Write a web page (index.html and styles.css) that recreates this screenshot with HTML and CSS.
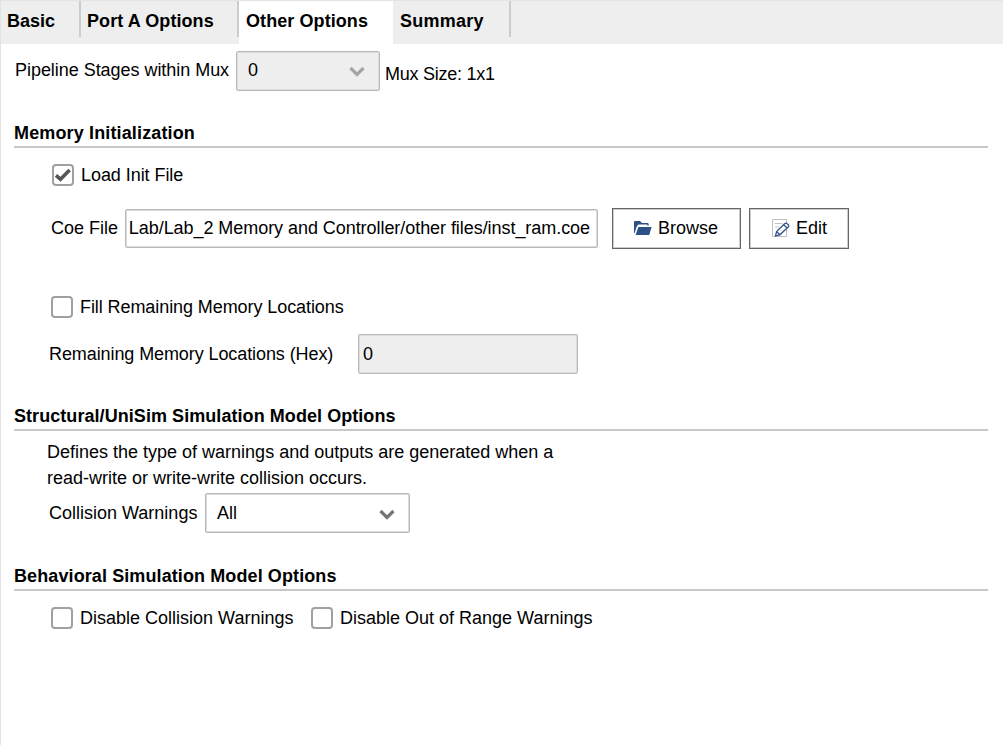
FILE: index.html
```html
<!DOCTYPE html>
<html lang="en">
<head>
<meta charset="utf-8">
<title>Other Options</title>
<link rel="stylesheet" href="styles.css">
</head>
<body>
<div class="panel">
  <nav class="tabs">
    <div class="tab tab-basic">Basic</div>
    <div class="tab tab-port">Port A Options</div>
    <div class="tab tab-other active">Other Options</div>
    <div class="tab tab-summary">Summary</div>
  </nav>
  <main class="content">
    <div class="row pipeline">
      <span class="label pipeline-label">Pipeline Stages within Mux</span>
      <div class="select disabled"><span>0</span><svg class="chevron" viewBox="0 0 16 11"><path d="M1.5 2 8 8.5 14.5 2"/></svg></div>
      <span class="mux">Mux Size: 1x1</span>
    </div>

    <section class="section memory">
      <h2>Memory Initialization</h2>
      <div class="row load">
        <span class="check"><svg viewBox="0 0 18 18"><path d="M2 9.3 6.5 13.3 15.6 4"/></svg></span><span>Load Init File</span>
      </div>
      <div class="row coe">
        <span class="label coe-label">Coe File</span>
        <div class="input path"><span>Lab/Lab_2 Memory and Controller/other files/inst_ram.coe</span></div>
        <div class="button browse">
          <svg class="icon" viewBox="0 0 19 18"><path class="folder" d="M1 14V3.2Q1 2 2.2 2H7L9 4H14.5Q15.6 4 15.6 5.2V6.7H14.4V5.5H5.2L3.4 8.2 1.7 14Z"/><path class="folder" d="M5.4 7.9H18.6L16.2 16H2.6Z"/></svg><span>Browse</span>
        </div>
        <div class="button edit">
          <svg class="icon" viewBox="0 0 19 18"><path class="paper" d="M1.5 .5H15.5V17.5H1.5ZM4 4.5H11M4 8H8"/><path class="pencil" d="M4.5 16.8 5.6 12.5 13.8 4.5Q15 3.6 16.2 4.7L17.2 5.7Q18.2 6.9 17.2 8L8.8 15.8ZM5.6 12.5 8.8 15.8M12.7 5.7 16 9"/></svg><span>Edit</span>
        </div>
      </div>
      <div class="row fill"><span class="check"></span><span>Fill Remaining Memory Locations</span></div>
      <div class="row remaining">
        <span class="label remaining-label">Remaining Memory Locations (Hex)</span>
        <div class="input disabled hex">0</div>
      </div>
    </section>

    <section class="section structural">
      <h2>Structural/UniSim Simulation Model Options</h2>
      <p>Defines the type of warnings and outputs are generated when a<br>read-write or write-write collision occurs.</p>
      <div class="row collision">
        <span class="label collision-label">Collision Warnings</span>
        <div class="select wide"><span>All</span><svg class="chevron" viewBox="0 0 16 11"><path d="M1.5 2 8 8.5 14.5 2"/></svg></div>
      </div>
    </section>

    <section class="section behavioral">
      <h2>Behavioral Simulation Model Options</h2>
      <div class="row disable">
        <div class="option"><span class="check"></span><span>Disable Collision Warnings</span></div>
        <div class="option"><span class="check"></span><span>Disable Out of Range Warnings</span></div>
      </div>
    </section>
  </main>
</div>
</body>
</html>
```
FILE: styles.css
```css
* { box-sizing: border-box; }
body {
  margin: 0;
  background: #fff;
  color: #000;
  font: 18px/20px "Liberation Sans", Arial, sans-serif;
}
.panel { height: 745px; border-left: 1px solid #e2e2e2; overflow: hidden; }
.tabs {
  display: flex;
  height: 44px;
  border-top: 1px solid #e4e4e4;
  background: #eee;
  font-weight: bold;
}
.tab { position: relative; padding: 10px 0 0 6px; white-space: nowrap; }
.tab-basic { width: 80px; }
.tab-port { width: 158px; letter-spacing: 0.08px; }
.tab-other { width: 154px; padding-left: 7px; letter-spacing: 0.08px; }
.tab-summary { width: 118px; padding-left: 7px; letter-spacing: 0.25px; }
.tab::after {
  content: "";
  position: absolute;
  top: 0;
  right: 0;
  width: 2px;
  height: 36px;
  background: #ccc;
}
.tab-other::after { display: none; }
.active { background: #fff; }
.content { padding: 7px 15px 0 13px; }
.row { display: flex; align-items: center; white-space: nowrap; }
.label { flex: none; }
.pipeline { height: 40px; }
.pipeline-label { width: 222px; padding: 0 0 2px 1px; letter-spacing: -0.04px; }
.mux { padding: 6px 0 0 5px; letter-spacing: -0.25px; }
.select {
  display: flex;
  align-items: center;
  justify-content: space-between;
  width: 144px;
  height: 40px;
  padding: 0 14px 2px 11px;
  border: 1px solid #b8b8b8;
  border-radius: 2px;
  background: #fff;
  box-shadow: inset 0 0 0 1px #ddd;
}
.chevron {
  width: 16px;
  height: 11px;
  margin-top: 3px;
  fill: none;
  stroke: #777;
  stroke-width: 3.2;
}
.disabled { background: #eee; }
.disabled .chevron { stroke: #a5a5a5; }
h2 {
  height: 25px;
  margin: 0;
  border-bottom: 2px solid #c8c8c8;
  font-size: 18px;
  line-height: 20px;
}
.memory { margin-top: 32px; }
.memory h2 { letter-spacing: 0.14px; }
.check {
  display: flex;
  flex: none;
  width: 22px;
  height: 22px;
  margin-right: 7px;
  border: 2px solid #a0a0a0;
  border-radius: 4px;
  background: #fff;
}
.check svg { width: 18px; height: 18px; fill: none; stroke: #555; stroke-width: 3.6; }
.load { height: 22px; margin: 16px 0 0 38px; letter-spacing: -0.06px; }
.coe { height: 42px; margin: 21px 0 0 37px; }
.coe-label { width: 74px; }
.input {
  display: flex;
  align-items: center;
  height: 39px;
  border: 1px solid #b8b8b8;
  border-radius: 2px;
  box-shadow: inset 0 0 0 1px #ddd;
}
.path { width: 473px; justify-content: flex-end; padding-right: 7px; overflow: hidden; letter-spacing: -0.055px; }
.button {
  display: flex;
  align-items: center;
  height: 41px;
  border: 1px solid #666;
  box-shadow: inset 0 0 0 1px #ccc;
}
.browse { width: 129px; margin-left: 14px; padding-left: 20px; }
.edit { width: 100px; margin-left: 8px; padding-left: 21px; }
.icon { flex: none; width: 19px; height: 18px; margin-right: 6px; }
.folder { fill: #2f4f87; }
.paper { fill: #fff; stroke: #c0c0c0; stroke-width: 1; }
.pencil { fill: #fff; stroke: #35548b; stroke-width: 1.3; }
.fill { height: 22px; margin: 47px 0 0 37px; letter-spacing: -0.08px; }
.remaining { height: 40px; margin: 16px 0 0 35px; }
.remaining-label { width: 309px; letter-spacing: -0.09px; }
.hex { width: 220px; height: 40px; padding-left: 4px; }
.structural { margin-top: 32px; }
.structural h2 { letter-spacing: 0.06px; }
p { margin: 8px 0 0 33px; line-height: 26px; }
.collision { height: 40px; margin: 2px 0 0 35px; }
.collision-label { width: 156px; padding-bottom: 1px; }
.wide { width: 205px; }
.collision .select { padding-bottom: 1px; }
.behavioral { margin-top: 33px; }
.behavioral h2 { letter-spacing: 0.1px; }
.disable { height: 22px; margin: 16px 0 0 37px; }
.option { display: flex; align-items: center; width: 260px; }
```
